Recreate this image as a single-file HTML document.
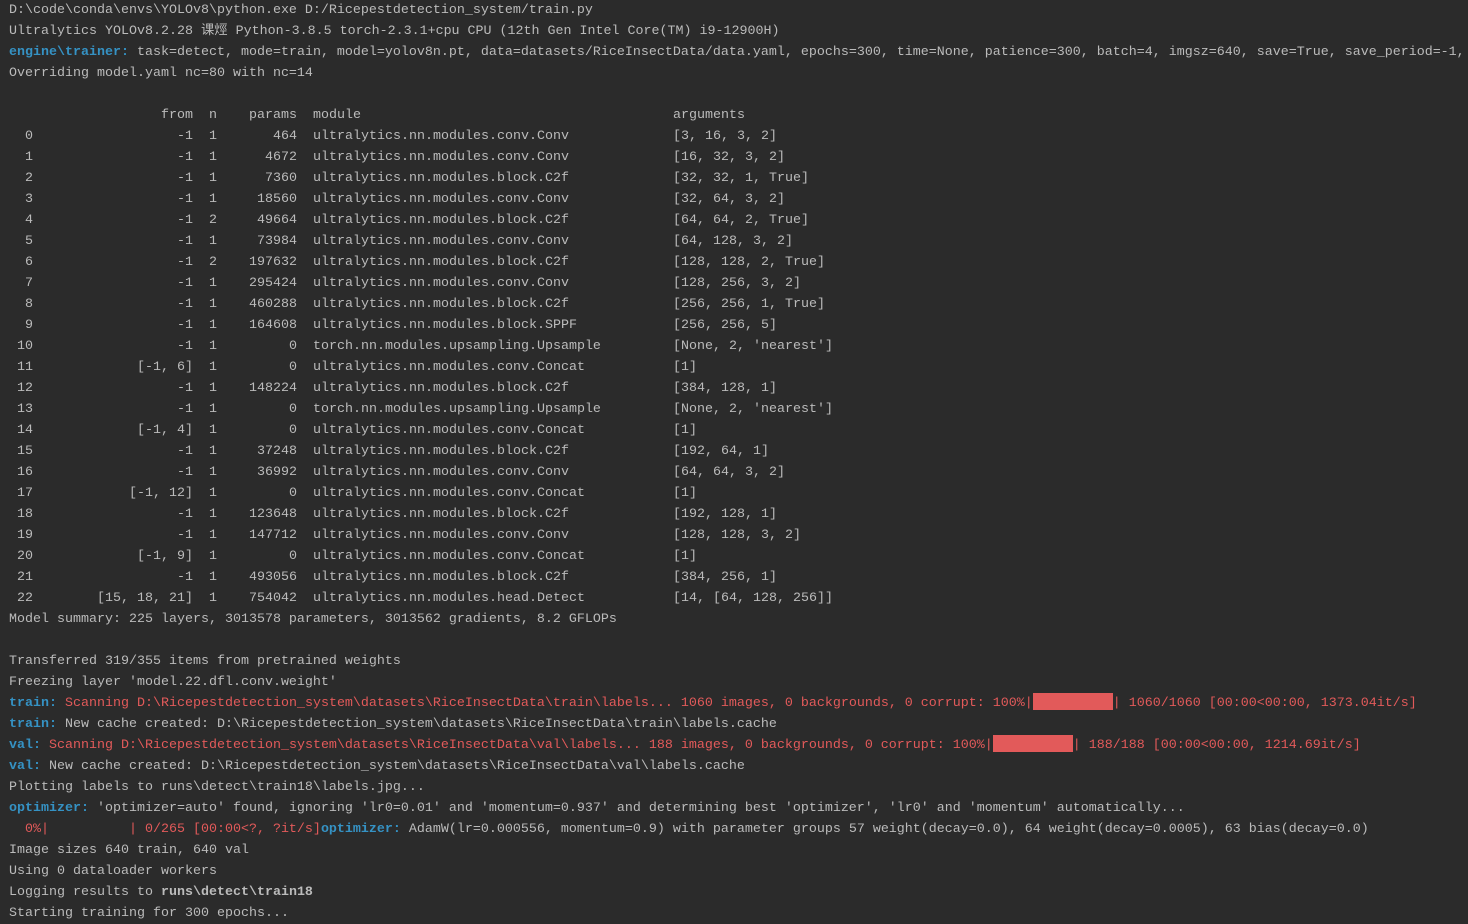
<!DOCTYPE html>
<html><head><meta charset="utf-8"><style>
html,body{margin:0;padding:0;background:#2b2b2b;width:1468px;height:924px;overflow:hidden}
pre{margin:0;padding:0 0 0 9px;font-family:"Liberation Mono","Noto Sans CJK SC",monospace;font-size:13.333px;line-height:21px;color:#bbbbbb;white-space:pre}
.b{color:#3592c4;font-weight:bold}
.r{color:#e25a5a}
.bar{display:inline-block;background:#e25a5a;height:17px;vertical-align:-4px}
.row span{display:inline-block}
.i{width:24px;text-align:right}.f{width:160px;text-align:right}.n{width:24px;text-align:right}.p{width:80px;text-align:right}.m{margin-left:16px;width:360px}
.w{font-weight:bold}
</style></head><body><pre>D:\code\conda\envs\YOLOv8\python.exe D:/Ricepestdetection_system/train.py
Ultralytics YOLOv8.2.28 课烴 Python-3.8.5 torch-2.3.1+cpu CPU (12th Gen Intel Core(TM) i9-12900H)
<span class="b">engine\trainer:</span> task=detect, mode=train, model=yolov8n.pt, data=datasets/RiceInsectData/data.yaml, epochs=300, time=None, patience=300, batch=4, imgsz=640, save=True, save_period=-1,
Overriding model.yaml nc=80 with nc=14

<div class="row"><span class="i"></span><span class="f">from</span><span class="n">n</span><span class="p">params</span><span class="m">module</span><span>arguments</span></div><div class="row"><span class="i">0</span><span class="f">-1</span><span class="n">1</span><span class="p">464</span><span class="m">ultralytics.nn.modules.conv.Conv</span><span>[3, 16, 3, 2]</span></div><div class="row"><span class="i">1</span><span class="f">-1</span><span class="n">1</span><span class="p">4672</span><span class="m">ultralytics.nn.modules.conv.Conv</span><span>[16, 32, 3, 2]</span></div><div class="row"><span class="i">2</span><span class="f">-1</span><span class="n">1</span><span class="p">7360</span><span class="m">ultralytics.nn.modules.block.C2f</span><span>[32, 32, 1, True]</span></div><div class="row"><span class="i">3</span><span class="f">-1</span><span class="n">1</span><span class="p">18560</span><span class="m">ultralytics.nn.modules.conv.Conv</span><span>[32, 64, 3, 2]</span></div><div class="row"><span class="i">4</span><span class="f">-1</span><span class="n">2</span><span class="p">49664</span><span class="m">ultralytics.nn.modules.block.C2f</span><span>[64, 64, 2, True]</span></div><div class="row"><span class="i">5</span><span class="f">-1</span><span class="n">1</span><span class="p">73984</span><span class="m">ultralytics.nn.modules.conv.Conv</span><span>[64, 128, 3, 2]</span></div><div class="row"><span class="i">6</span><span class="f">-1</span><span class="n">2</span><span class="p">197632</span><span class="m">ultralytics.nn.modules.block.C2f</span><span>[128, 128, 2, True]</span></div><div class="row"><span class="i">7</span><span class="f">-1</span><span class="n">1</span><span class="p">295424</span><span class="m">ultralytics.nn.modules.conv.Conv</span><span>[128, 256, 3, 2]</span></div><div class="row"><span class="i">8</span><span class="f">-1</span><span class="n">1</span><span class="p">460288</span><span class="m">ultralytics.nn.modules.block.C2f</span><span>[256, 256, 1, True]</span></div><div class="row"><span class="i">9</span><span class="f">-1</span><span class="n">1</span><span class="p">164608</span><span class="m">ultralytics.nn.modules.block.SPPF</span><span>[256, 256, 5]</span></div><div class="row"><span class="i">10</span><span class="f">-1</span><span class="n">1</span><span class="p">0</span><span class="m">torch.nn.modules.upsampling.Upsample</span><span>[None, 2, 'nearest']</span></div><div class="row"><span class="i">11</span><span class="f">[-1, 6]</span><span class="n">1</span><span class="p">0</span><span class="m">ultralytics.nn.modules.conv.Concat</span><span>[1]</span></div><div class="row"><span class="i">12</span><span class="f">-1</span><span class="n">1</span><span class="p">148224</span><span class="m">ultralytics.nn.modules.block.C2f</span><span>[384, 128, 1]</span></div><div class="row"><span class="i">13</span><span class="f">-1</span><span class="n">1</span><span class="p">0</span><span class="m">torch.nn.modules.upsampling.Upsample</span><span>[None, 2, 'nearest']</span></div><div class="row"><span class="i">14</span><span class="f">[-1, 4]</span><span class="n">1</span><span class="p">0</span><span class="m">ultralytics.nn.modules.conv.Concat</span><span>[1]</span></div><div class="row"><span class="i">15</span><span class="f">-1</span><span class="n">1</span><span class="p">37248</span><span class="m">ultralytics.nn.modules.block.C2f</span><span>[192, 64, 1]</span></div><div class="row"><span class="i">16</span><span class="f">-1</span><span class="n">1</span><span class="p">36992</span><span class="m">ultralytics.nn.modules.conv.Conv</span><span>[64, 64, 3, 2]</span></div><div class="row"><span class="i">17</span><span class="f">[-1, 12]</span><span class="n">1</span><span class="p">0</span><span class="m">ultralytics.nn.modules.conv.Concat</span><span>[1]</span></div><div class="row"><span class="i">18</span><span class="f">-1</span><span class="n">1</span><span class="p">123648</span><span class="m">ultralytics.nn.modules.block.C2f</span><span>[192, 128, 1]</span></div><div class="row"><span class="i">19</span><span class="f">-1</span><span class="n">1</span><span class="p">147712</span><span class="m">ultralytics.nn.modules.conv.Conv</span><span>[128, 128, 3, 2]</span></div><div class="row"><span class="i">20</span><span class="f">[-1, 9]</span><span class="n">1</span><span class="p">0</span><span class="m">ultralytics.nn.modules.conv.Concat</span><span>[1]</span></div><div class="row"><span class="i">21</span><span class="f">-1</span><span class="n">1</span><span class="p">493056</span><span class="m">ultralytics.nn.modules.block.C2f</span><span>[384, 256, 1]</span></div><div class="row"><span class="i">22</span><span class="f">[15, 18, 21]</span><span class="n">1</span><span class="p">754042</span><span class="m">ultralytics.nn.modules.head.Detect</span><span>[14, [64, 128, 256]]</span></div>Model summary: 225 layers, 3013578 parameters, 3013562 gradients, 8.2 GFLOPs

Transferred 319/355 items from pretrained weights
Freezing layer 'model.22.dfl.conv.weight'
<span class="b">train:</span> <span class="r">Scanning D:\Ricepestdetection_system\datasets\RiceInsectData\train\labels... 1060 images, 0 backgrounds, 0 corrupt: 100%|<span class="bar" style="width:80px"></span>| 1060/1060 [00:00&lt;00:00, 1373.04it/s]</span>
<span class="b">train:</span> New cache created: D:\Ricepestdetection_system\datasets\RiceInsectData\train\labels.cache
<span class="b">val:</span> <span class="r">Scanning D:\Ricepestdetection_system\datasets\RiceInsectData\val\labels... 188 images, 0 backgrounds, 0 corrupt: 100%|<span class="bar" style="width:80px"></span>| 188/188 [00:00&lt;00:00, 1214.69it/s]</span>
<span class="b">val:</span> New cache created: D:\Ricepestdetection_system\datasets\RiceInsectData\val\labels.cache
Plotting labels to runs\detect\train18\labels.jpg...
<span class="b">optimizer:</span> 'optimizer=auto' found, ignoring 'lr0=0.01' and 'momentum=0.937' and determining best 'optimizer', 'lr0' and 'momentum' automatically...
<span class="r">  0%|          | 0/265 [00:00&lt;?, ?it/s]</span><span class="b">optimizer:</span> AdamW(lr=0.000556, momentum=0.9) with parameter groups 57 weight(decay=0.0), 64 weight(decay=0.0005), 63 bias(decay=0.0)
Image sizes 640 train, 640 val
Using 0 dataloader workers
Logging results to <span class="w">runs\detect\train18</span>
Starting training for 300 epochs...</pre></body></html>
